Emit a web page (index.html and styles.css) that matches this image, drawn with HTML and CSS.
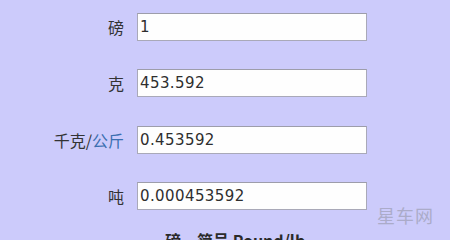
FILE: index.html
```html
<!DOCTYPE html>
<html lang="zh">
<head>
<meta charset="utf-8">
<link rel="stylesheet" href="styles.css">
</head>
<body>
<div class="page">
  <div class="form">
    <div class="row">
      <label class="label">磅</label>
      <div class="field">1</div>
    </div>
    <div class="row">
      <label class="label">克</label>
      <div class="field">453.592</div>
    </div>
    <div class="row">
      <label class="label">千克/<span class="link">公斤</span></label>
      <div class="field">0.453592</div>
    </div>
    <div class="row">
      <label class="label">吨</label>
      <div class="field">0.000453592</div>
    </div>
  </div>
  <p class="note">磅，简号 Pound/lb</p>
  <div class="watermark">星车网</div>
</div>
</body>
</html>
```

FILE: styles.css
```css
html, body {
  margin: 0;
  padding: 0;
}
body {
  background: #cccbfb;
  width: 450px;
  height: 240px;
  overflow: hidden;
  font-family: "Noto Sans CJK SC", "DejaVu Sans", sans-serif;
}
.page {
  position: relative;
  width: 450px;
  height: 240px;
}
.form {
  display: flex;
  flex-direction: column;
  gap: 28.3px;
  padding-top: 13px;
}
.row {
  display: grid;
  grid-template-columns: 124px 230px;
  column-gap: 13px;
  align-items: center;
}
.label {
  text-align: right;
  font-size: 16px;
  line-height: 28px;
  color: #333333;
}
.link {
  color: #3b6fb0;
}
.field {
  box-sizing: border-box;
  height: 28px;
  background: #fefefe;
  border: 1px solid #a9a9b8;
  border-top-color: #9d9daa;
  padding-left: 2px;
  font-family: "DejaVu Sans", Verdana, sans-serif;
  font-size: 15px;
  letter-spacing: 0.4px;
  line-height: 26px;
  color: #2e2e2e;
}
.note {
  margin: 0;
  padding-left: 165px;
  padding-top: 20px;
  font-size: 16px;
  font-weight: bold;
  color: #2a2a2a;
  line-height: 20px;
}
.watermark {
  position: absolute;
  left: 377px;
  top: 202px;
  font-size: 18px;
  color: #ababc9;
  letter-spacing: 1px;
}
```
